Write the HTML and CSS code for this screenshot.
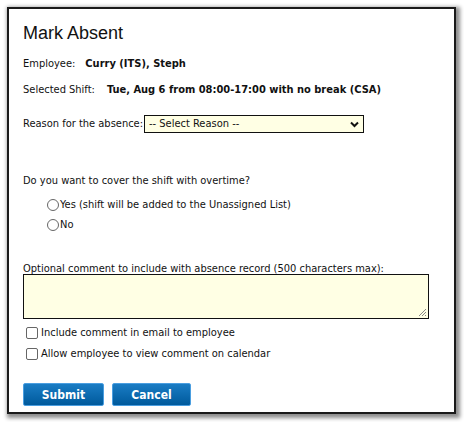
FILE: index.html
```html
<!DOCTYPE html>
<html>
<head>
<meta charset="utf-8">
<link rel="stylesheet" href="styles.css">
</head>
<body>
<div class="dialog">
  <h1 class="title">Mark Absent</h1>
  <div class="row"><span class="lbl">Employee:</span><b class="val emp">Curry (ITS), Steph</b></div>
  <div class="row shift"><span class="lbl">Selected Shift:</span><b class="val sh">Tue, Aug 6 from 08:00-17:00 with no break (CSA)</b></div>
  <div class="row reason"><span class="lbl">Reason for the absence:</span>
    <div class="select"><span>-- Select Reason --</span>
      <svg class="chev" width="9" height="7" viewBox="0 0 9 7"><path d="M1 1.5 L4.5 5 L8 1.5" fill="none" stroke="#111" stroke-width="2"/></svg>
    </div>
  </div>
  <div class="row q">Do you want to cover the shift with overtime?</div>
  <div class="radios">
    <label class="opt"><span class="radio"></span>Yes (shift will be added to the Unassigned List)</label>
    <label class="opt"><span class="radio"></span>No</label>
  </div>
  <div class="row cl">Optional comment to include with absence record (500 characters max):</div>
  <div class="textarea">
    <svg class="grip" width="10" height="10" viewBox="0 0 10 10"><path d="M9 2 L2 9 M9 5 L5 9 M9 8 L8 9" stroke="#888" stroke-width="1"/></svg>
  </div>
  <div class="checks">
    <label class="opt"><span class="check"></span>Include comment in email to employee</label>
    <label class="opt"><span class="check"></span>Allow employee to view comment on calendar</label>
  </div>
  <div class="buttons">
    <span class="btn submit">Submit</span>
    <span class="btn cancel">Cancel</span>
  </div>
</div>
</body>
</html>
```
FILE: styles.css
```css
html, body { margin: 0; padding: 0; background: #fff; }
body { width: 464px; height: 422px; overflow: hidden; font-family: "DejaVu Sans Condensed", "DejaVu Sans", sans-serif; font-size: 11px; color: #111; }
.dialog {
  margin: 7px 0 0 7px;
  width: 431px; height: 403px;
  border: 2px solid #1a1a1a;
  box-shadow: 2px 2px 4px 2px rgba(0,0,0,0.45);
  padding: 0 0 0 14px;
  box-sizing: content-box;
}
.title { font-family: "Liberation Sans", Arial, sans-serif; font-weight: normal; font-size: 18px; margin: 13px 0 0 0; line-height: 22px; color: #111; }
.row { display: flex; align-items: center; line-height: 14px; }
.title + .row { margin-top: 13px; }
.emp { margin-left: 10px; }
.shift { margin-top: 12px; }
.sh { margin-left: 12px; }
.val { font-weight: bold; }
.reason { margin-top: 18px; }
.select {
  margin-left: 1px;
  width: 220px; height: 18px; box-sizing: border-box;
  border: 1px solid #111; background: #ffffe4;
  display: flex; align-items: center; justify-content: space-between;
  padding: 0 4px 0 4px;
}
.q { margin-top: 41px; }
.radios { margin-top: 10px; margin-left: 24px; display: flex; flex-direction: column; gap: 6px; }
.opt { display: flex; align-items: center; line-height: 14px; }
.radio { width: 12px; height: 12px; border: 1px solid #666; border-radius: 50%; margin-right: 1px; background: #fff; box-sizing: border-box; }
.cl { margin-top: 30px; }
.textarea {
  position: relative;
  margin-top: -2px;
  width: 406px; height: 45px; box-sizing: border-box;
  border: 1px solid #111; background: #ffffe4;
}
.grip { position: absolute; right: 1px; bottom: 1px; }
.checks { margin-top: 7px; margin-left: 3px; display: flex; flex-direction: column; gap: 7px; }
.check { width: 12px; height: 12px; border: 1px solid #666; border-radius: 2px; margin-right: 3px; background: #fff; box-sizing: border-box; }
.buttons { margin-top: 22px; display: flex; gap: 8px; }
.btn {
  display: flex; align-items: center; justify-content: center;
  height: 23px; box-sizing: border-box;
  border: 1px solid #4a9ee0; border-radius: 2px;
  background: linear-gradient(#1a7cc4, #005a9c);
  color: #fff; font-weight: bold; font-size: 12px;
}
.submit { width: 81px; }
.cancel { width: 79px; }
```
